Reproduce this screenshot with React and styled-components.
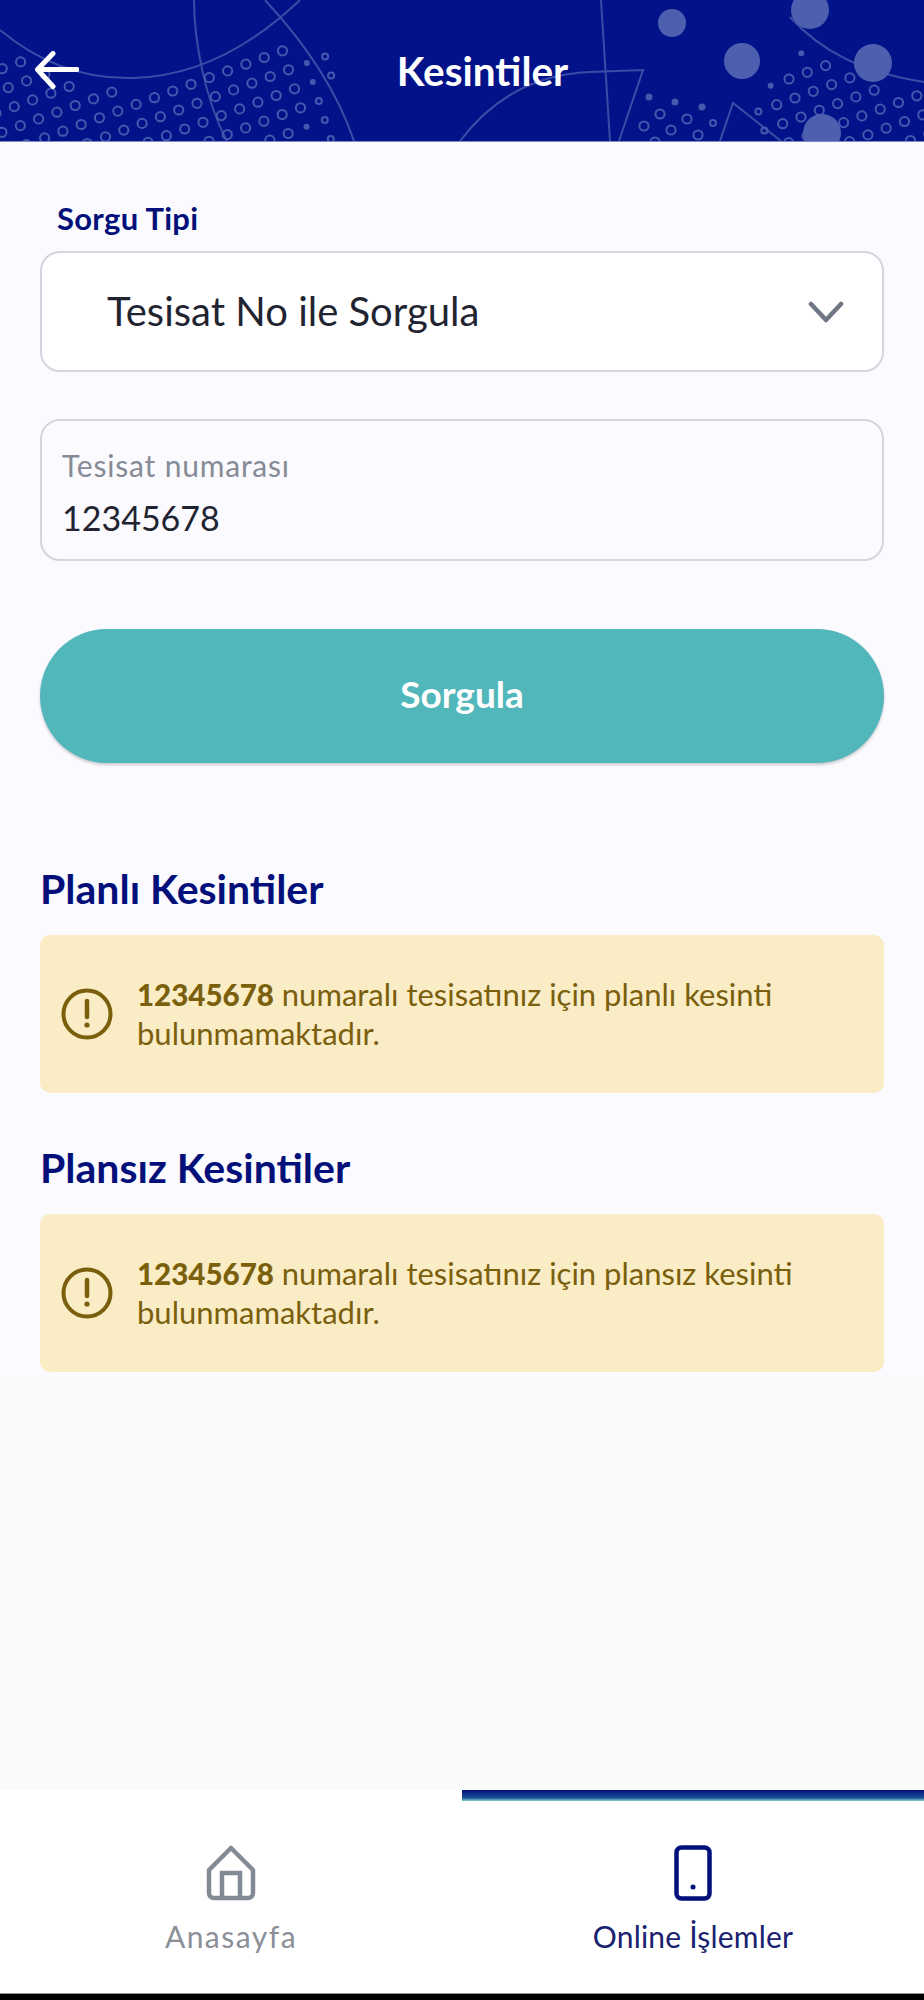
import React from "react";
import styled, { createGlobalStyle } from "styled-components";

const GlobalStyle = createGlobalStyle`
  html, body {
    margin: 0;
    padding: 0;
    background: #000;
  }
  * {
    box-sizing: border-box;
  }
  body {
    font-family: "Lato", "Liberation Sans", sans-serif;
  }
`;

// top edge of the dotted areas in the header artwork
const lerp = (pts, x) => {
  for (let i = 1; i < pts.length; i++) {
    if (x <= pts[i][0]) {
      const [x0, y0] = pts[i - 1];
      const [x1, y1] = pts[i];
      return y0 + ((x - x0) / (x1 - x0)) * (y1 - y0);
    }
  }
  return pts[pts.length - 1][1];
};
const leftEdge = [[-10, 55], [20, 58], [70, 83], [112, 88], [172, 88], [190, 75], [227, 66], [263, 52], [290, 46], [335, 46]];
const rightEdge = [[750, 118], [771, 84], [789, 60], [801, 50], [850, 72], [875, 88], [930, 92]];

const rings = [];
for (let i = -30; i < 30; i++) {
  for (let j = -12; j < 12; j++) {
    const lx = 172.7 + i * 18.3 + j * 6;
    const ly = 91 - i * 6.7 + j * 19;
    if (lx > -8 && lx < 332 && ly < 146 && ly > lerp(leftEdge, lx)) {
      const small = lx > 305;
      rings.push({ x: lx, y: ly, r: small ? 3 : 4.6, solid: small && lx < 315 });
    }
    const rx = 789 + i * 18.3 + j * 6;
    const ry = 79 - i * 6.7 + j * 19;
    if (rx > 755 && rx < 930 && ry < 146 && ry > lerp(rightEdge, rx)) {
      const small = rx < 775 || ry < 62;
      rings.push({ x: rx, y: ry, r: small ? 3 : 4.6, solid: small && ry < 95 });
    }
  }
}
[
  [660, 114, 4.6],
  [687, 119, 4.6],
  [644, 126, 4.6],
  [671, 130, 4.6],
  [698, 135, 4.6],
  [713, 123, 3],
  [655, 142, 4.6],
].forEach(([x, y, r]) => rings.push({ x, y, r }));
[
  [649, 97],
  [675, 102],
  [702, 107],
].forEach(([x, y]) => rings.push({ x, y, r: 3.5, solid: true }));

const blobs = [
  [672, 23, 14],
  [742, 61, 18],
  [810, 10, 19],
  [873, 63, 19],
  [822, 133, 19],
];

const curves = [
  "M0 30 Q60 80 133 78 Q220 76 300 0",
  "M194 0 C194 40 205 100 227 141",
  "M265 0 Q330 70 354 141",
  "M601 0 L610 141",
  "M460 141 Q510 75 590 72 L643 70 L619 141",
  "M720 141 L733 103 L781 141",
  "M790 17 C820 50 860 72 924 82",
];

const App = () => {
  return (
    <Page>
      <GlobalStyle />
      <Header>
        <Pattern viewBox="0 0 924 141" aria-hidden="true">
          {curves.map((d) => (
            <path key={d} d={d} fill="none" stroke="#3c4ca6" strokeWidth="2" />
          ))}
          {rings.map((c) => (
            <circle
              key={`${c.x}-${c.y}`}
              cx={c.x}
              cy={c.y}
              r={c.r}
              fill={c.solid ? "#4757ae" : "none"}
              stroke="#4757ae"
              strokeWidth={c.solid ? 0 : 2}
            />
          ))}
          {blobs.map(([x, y, r]) => (
            <circle key={x} cx={x} cy={y} r={r} fill="#4e5fb0" />
          ))}
        </Pattern>
        <BackIcon viewBox="0 0 45 38" aria-hidden="true">
          <path
            d="M43 18.500H4M19 2.500L3.500 18.500L19 35.500"
            fill="none"
            stroke="#fff"
            strokeWidth="5"
            strokeLinecap="round"
            strokeLinejoin="round"
          />
        </BackIcon>
        <HeaderTitle>Kesintiler</HeaderTitle>
      </Header>

      <Main>
        <Content>
          <FieldLabel>Sorgu Tipi</FieldLabel>
          <Select>
            <span>Tesisat No ile Sorgula</span>
            <svg width="36" height="22" viewBox="0 0 36 22" aria-hidden="true">
              <path
                d="M3 3L18 19L33 3"
                fill="none"
                stroke="#6f7784"
                strokeWidth="4.500"
                strokeLinecap="round"
                strokeLinejoin="round"
              />
            </svg>
          </Select>
          <InputBox>
            <InputLabel>Tesisat numarası</InputLabel>
            <InputValue>12345678</InputValue>
          </InputBox>
          <SubmitButton>Sorgula</SubmitButton>

          <SectionTitle>Planlı Kesintiler</SectionTitle>
          <Alert>
            <WarnIcon />
            <AlertText>
              <strong>12345678</strong> numaralı tesisatınız için planlı kesinti
              bulunmamaktadır.
            </AlertText>
          </Alert>

          <SectionTitle $second>Plansız Kesintiler</SectionTitle>
          <Alert>
            <WarnIcon />
            <AlertText>
              <strong>12345678</strong> numaralı tesisatınız için plansız
              kesinti bulunmamaktadır.
            </AlertText>
          </Alert>
        </Content>
      </Main>

      <TabBar>
        <Tab>
          <TabIndicator />
          <svg width="50" height="56" viewBox="0 0 50 56" aria-hidden="true">
            <path
              d="M25 3L47 25V48a5 5 0 0 1-5 5H8a5 5 0 0 1-5-5V25Z"
              fill="none"
              stroke="#828a95"
              strokeWidth="4.500"
              strokeLinejoin="round"
            />
            <path
              d="M16 52V28H34V52"
              fill="none"
              stroke="#828a95"
              strokeWidth="4.500"
            />
          </svg>
          <TabLabel>Anasayfa</TabLabel>
        </Tab>
        <Tab>
          <TabIndicator $active />
          <svg width="38" height="56" viewBox="0 0 38 56" aria-hidden="true">
            <rect
              x="2.500"
              y="2.500"
              width="33"
              height="51"
              rx="5"
              fill="none"
              stroke="#03107a"
              strokeWidth="4.500"
            />
            <circle cx="19" cy="42" r="2.500" fill="#03107a" />
          </svg>
          <TabLabel $active>Online İşlemler</TabLabel>
        </Tab>
      </TabBar>
      <SystemBar />
    </Page>
  );
};

const WarnIcon = () => (
  <svg width="52" height="54" viewBox="0 0 52 54" aria-hidden="true">
    <circle cx="26" cy="27" r="23.500" fill="none" stroke="#7a5f0d" strokeWidth="4" />
    <path d="M26 14V30" stroke="#7a5f0d" strokeWidth="4.500" strokeLinecap="round" />
    <circle cx="26" cy="38" r="2.600" fill="#7a5f0d" />
  </svg>
);

const Page = styled.div`
  width: 924px;
  height: 2000px;
  display: flex;
  flex-direction: column;
  overflow: hidden;
  background: #fff;
`;

const Header = styled.header`
  position: relative;
  height: 142px;
  flex-shrink: 0;
  display: flex;
  align-items: center;
  padding: 0 34px;
  background: #02138a;
  border-bottom: 1px solid #7f8acb;
`;

const Pattern = styled.svg`
  position: absolute;
  left: 0;
  top: 0;
  width: 924px;
  height: 141px;
`;

const BackIcon = styled.svg`
  position: relative;
  width: 45px;
  height: 38px;
  flex-shrink: 0;
  margin-top: -1px;
`;

const HeaderTitle = styled.h1`
  position: relative;
  flex: 1;
  margin: 0 4px 0 0;
  text-align: center;
  color: #fff;
  font-size: 40.500px;
  font-weight: 700;
`;

const Main = styled.main`
  flex: 1;
  background: #fafafa;
`;

const Content = styled.section`
  display: flex;
  flex-direction: column;
  padding: 57px 40px 0;
  height: 1234px;
  background: #fafaff;
`;

const FieldLabel = styled.label`
  margin-left: 17px;
  height: 40px;
  line-height: 38px;
  color: #03107a;
  font-size: 31px;
  letter-spacing: 0.3px;
  font-weight: 700;
`;

const Select = styled.div`
  height: 121px;
  margin-top: 12px;
  display: flex;
  align-items: center;
  justify-content: space-between;
  padding: 0 38px 0 65px;
  background: #fff;
  border: 2px solid #d3d6df;
  border-radius: 20px;
  color: #1f2430;
  font-size: 40px;

  span {
    margin-bottom: 2px;
  }
`;

const InputBox = styled.div`
  height: 142px;
  margin-top: 47px;
  display: flex;
  flex-direction: column;
  padding: 27px 20px 0;
  border: 2px solid #d3d6df;
  border-radius: 20px;
`;

const InputLabel = styled.span`
  color: #868b96;
  font-size: 30px;
  letter-spacing: 0.8px;
  line-height: 34px;
`;

const InputValue = styled.span`
  margin-top: 16px;
  color: #1f2430;
  font-size: 34px;
  line-height: 40px;
`;

const SubmitButton = styled.button`
  height: 134px;
  margin-top: 68px;
  padding: 0 0 6px;
  border: 0;
  border-radius: 67px;
  background: #52b7ba;
  box-shadow: 0 2px 3px rgba(0, 0, 0, 0.2);
  color: #fff;
  font-family: inherit;
  font-size: 37px;
  font-weight: 700;
`;

const SectionTitle = styled.h2`
  margin: ${(p) => (p.$second ? "51px" : "102px")} 0 0;
  height: 55px;
  line-height: 48px;
  color: #03107a;
  font-size: 41px;
  font-weight: 700;
`;

const Alert = styled.div`
  height: 158px;
  margin-top: 15px;
  display: flex;
  align-items: center;
  gap: 24px;
  padding: 0 30px 0 21px;
  background: #faecc5;
  border-radius: 10px;
  color: #7a5f0d;

  svg {
    flex-shrink: 0;
  }
`;

const AlertText = styled.p`
  margin: 0 0 2px;
  font-size: 31px;
  line-height: 38px;

  strong {
    font-weight: 900;
    font-size: 29.500px;
  }
`;

const TabBar = styled.nav`
  height: 203px;
  flex-shrink: 0;
  display: grid;
  grid-template-columns: 1fr 1fr;
  background: #fff;
`;

const Tab = styled.div`
  display: flex;
  flex-direction: column;
  align-items: center;
`;

const TabIndicator = styled.div`
  align-self: stretch;
  height: 11px;
  margin-bottom: 44px;
  background: ${(p) =>
    p.$active ? "linear-gradient(#03107a 0%, #1a4f96 70%, #7fd0d2 100%)" : "transparent"};
`;

const TabLabel = styled.span`
  margin-top: 17px;
  color: ${(p) => (p.$active ? "#1a2270" : "#8b8f97")};
  font-size: 30px;
  letter-spacing: ${(p) => (p.$active ? "0.2px" : "1.5px")};
  line-height: 36px;
`;

const SystemBar = styled.div`
  height: 7px;
  flex-shrink: 0;
  background: #000;
  border-top: 1px solid #999;
`;

export default App;
